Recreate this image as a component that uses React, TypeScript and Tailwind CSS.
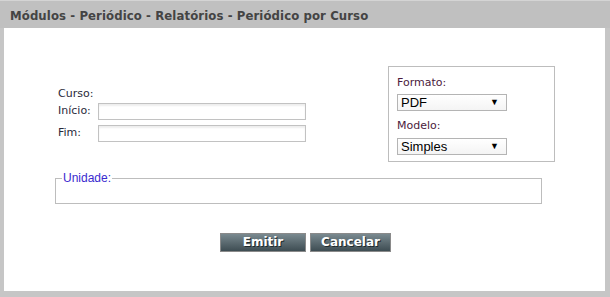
import React from 'react';

const verdana = "font-['Verdana','DejaVu_Sans',sans-serif]";

function Campo({ label }: { label: string }) {
  return (
    <div className="flex items-center h-[17px]">
      <span className="w-[40px] text-[11px] text-[#2a2a3a]">{label}</span>
      <div className="w-[208px] h-[17px] border border-[#c2c2c2] bg-white shadow-[inset_0_2px_2px_rgba(0,0,0,0.07)]" />
    </div>
  );
}

function Seletor({ valor }: { valor: string }) {
  return (
    <div className="w-[110px] h-[17px] border border-[#b4b4b4] bg-gradient-to-b from-white to-[#f4f4f4] flex items-center justify-between pl-[3px] pr-[7px] font-['Liberation_Sans',Arial,sans-serif] text-[13px] text-black">
      <span>{valor}</span>
      <span className="text-[9px]">▼</span>
    </div>
  );
}

export default function App() {
  return (
    <div className={`w-[610px] h-[297px] bg-[#c6c6c6] flex flex-col ${verdana}`}>
      {/* Barra de título */}
      <div className="h-[28px] shrink-0 bg-[#c0c0c0] border-t border-[#d4d4d4] px-[10px] flex items-center">
        <h1 className="font-['DejaVu_Sans_Condensed','DejaVu_Sans',sans-serif] font-bold text-[13px] text-[#444] pt-[2px] tracking-[0.1px]">
          Módulos - Periódico - Relatórios - Periódico por Curso
        </h1>
      </div>

      <div className="flex-1 flex pl-[4px] pr-[5px] pb-[6px]">
        <div className="flex-1 bg-white flex flex-col">
          {/* Filtros */}
          <div className="flex mt-[38px]">
            <div className="ml-[54px] mt-[19px] w-[248px] flex flex-col">
              <div className="h-[18px] text-[11px] text-[#2a2a3a] flex items-center">Curso:</div>
              <div className="flex flex-col gap-[5px]">
                <Campo label="Início:" />
                <Campo label="Fim:" />
              </div>
            </div>

            <div className="ml-[82px] w-[167px] h-[96px] border border-[#bdbdbd] px-[8px] pt-[9px] flex flex-col">
              <span className="text-[11px] text-[#4b1a3c] h-[14px] leading-[14px]">Formato:</span>
              <div className="mt-[4px]"><Seletor valor="PDF" /></div>
              <span className="text-[11px] text-[#4b1a3c] h-[14px] leading-[14px] mt-[8px]">Modelo:</span>
              <div className="mt-[5px]"><Seletor valor="Simples" /></div>
            </div>
          </div>

          {/* Unidade */}
          <fieldset className="ml-[51px] mt-[9px] w-[487px] h-[33px] border border-[#bdbdbd] px-[6px]">
            <legend className="px-[1px] font-['Liberation_Sans',Arial,sans-serif] text-[12px] text-[#3a2acf] leading-[14px]">Unidade:</legend>
          </fieldset>

          {/* Ações */}
          <div className="flex justify-center gap-[4px] mt-[29px] pl-[2px]">
            <button className="w-[86px] h-[19px] border border-[#8a8a8a] bg-gradient-to-b from-[#7a8a90] to-[#3e4d53] text-white font-bold text-[12px] leading-[17px] [text-shadow:1px_1px_0_#1e2a2e]">
              Emitir
            </button>
            <button className="w-[81px] h-[19px] border border-[#8a8a8a] bg-gradient-to-b from-[#7a8a90] to-[#3e4d53] text-white font-bold text-[12px] leading-[17px] [text-shadow:1px_1px_0_#1e2a2e]">
              Cancelar
            </button>
          </div>
        </div>
      </div>
    </div>
  );
}
